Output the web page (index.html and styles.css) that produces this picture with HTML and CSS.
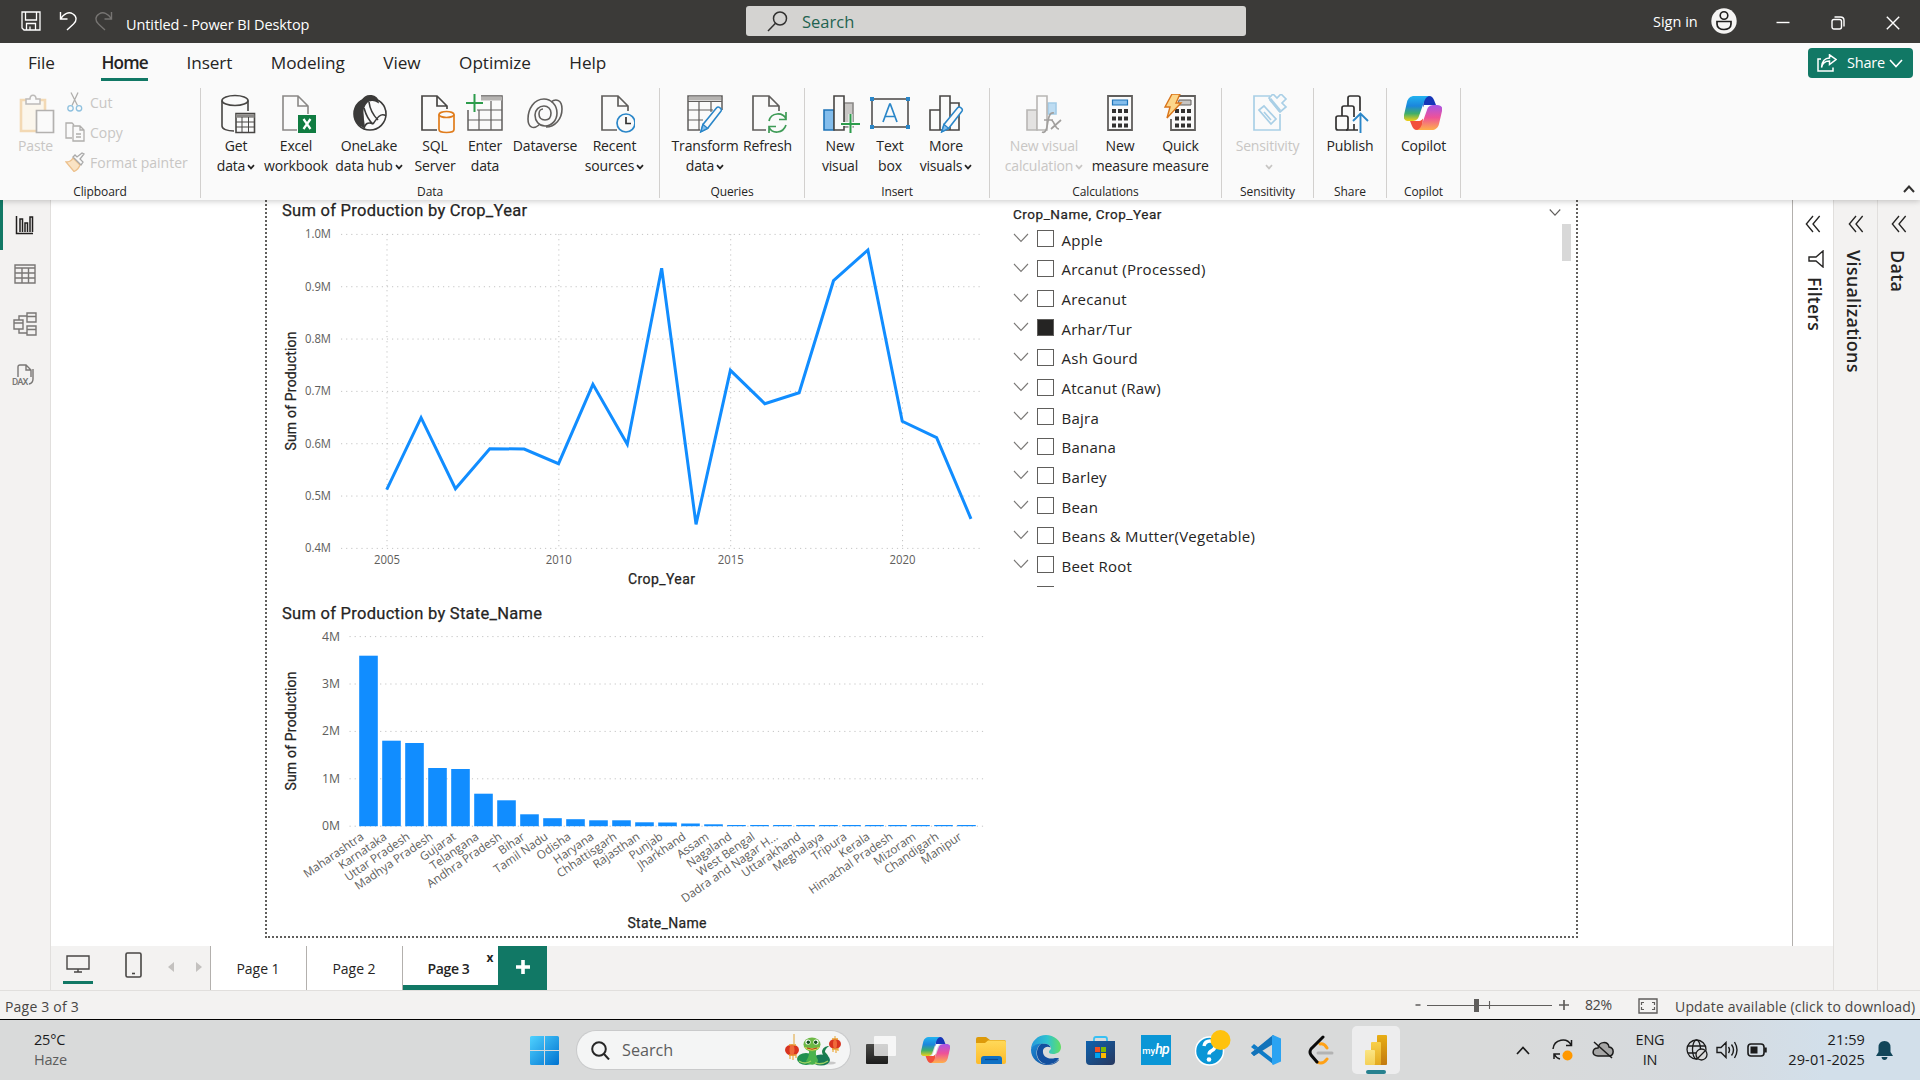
FILE: index.html
```html
<!DOCTYPE html>
<html lang="en">
<head>
<meta charset="utf-8">
<title>Untitled - Power BI Desktop</title>
<link rel="stylesheet" href="styles.css">
</head>
<body>
<svg class="defs" width="0" height="0" aria-hidden="true">
  <defs>
    <linearGradient id="cpA" x1="0" y1="0" x2="0" y2="1"><stop offset="0" stop-color="#22b3f0"/><stop offset=".4" stop-color="#1b86dc"/><stop offset=".7" stop-color="#3fae6a"/><stop offset="1" stop-color="#f2d016"/></linearGradient>
    <linearGradient id="cpB" x1="0" y1="0" x2="0" y2="1"><stop offset="0" stop-color="#a855e8"/><stop offset=".5" stop-color="#ee5298"/><stop offset="1" stop-color="#ffb04a"/></linearGradient>
    <linearGradient id="win" x1="0" y1="0" x2="1" y2="1"><stop offset="0" stop-color="#4fd2ff"/><stop offset="1" stop-color="#0072d0"/></linearGradient>
    <linearGradient id="dark" x1="0" y1="0" x2="0" y2="1"><stop offset="0" stop-color="#4a4a48"/><stop offset="1" stop-color="#1d1d1c"/></linearGradient>
    <linearGradient id="fold" x1="0" y1="0" x2="0" y2="1"><stop offset="0" stop-color="#ffd95a"/><stop offset="1" stop-color="#fdbb2a"/></linearGradient>
    <linearGradient id="edgeA" x1="0" y1="0" x2="1" y2="0"><stop offset="0" stop-color="#2598dc"/><stop offset=".55" stop-color="#2fc3cf"/><stop offset="1" stop-color="#62de62"/></linearGradient>
    <linearGradient id="edgeB" x1="0" y1="0" x2="1" y2="1"><stop offset="0" stop-color="#1b8ad6"/><stop offset="1" stop-color="#0e4596"/></linearGradient>
    <linearGradient id="bag" x1="0" y1="0" x2="1" y2="1"><stop offset="0" stop-color="#0e62ae"/><stop offset="1" stop-color="#27375e"/></linearGradient>
    <linearGradient id="pbA" x1="0" y1="0" x2="0" y2="1"><stop offset="0" stop-color="#e8ae14"/><stop offset="1" stop-color="#c27a10"/></linearGradient>
    <linearGradient id="pbB" x1="0" y1="0" x2="0" y2="1"><stop offset="0" stop-color="#f8d04a"/><stop offset="1" stop-color="#e3a91f"/></linearGradient>
    <linearGradient id="pbC" x1="0" y1="0" x2="0" y2="1"><stop offset="0" stop-color="#fbe584"/><stop offset="1" stop-color="#f4d057"/></linearGradient>
    <symbol id="copilot" viewBox="0 0 38 34" preserveAspectRatio="none">
      <path d="M20 0h5c3 0 4 2 5 4l2 5h-8c-3 0-4 1-5 3z" fill="#1636b8"/>
      <path d="M18 34h-5c-3 0-4-2-5-4l-2-5h8c3 0 4-1 5-3z" fill="#f2503c"/>
      <path d="M10 0h15c-3 1-4 3-5 6l-5 14c-1 4-4 5-7 5H5c-4 0-6-2-5-6L3 6c1-4 4-6 7-6z" fill="url(#cpA)"/>
      <path d="M28 34H13c3-1 4-3 5-6l5-14c1-4 4-5 7-5h3c4 0 6 2 5 6l-3 13c-1 4-4 6-7 6z" fill="url(#cpB)"/>
      <path d="M20 9h5c-2 1-3 3-4 6l-2 7c-1 2-3 3-6 3 2-1 2-2 3-4z" fill="#fff"/>
    </symbol>
    <symbol id="dbl" viewBox="0 0 18 20"><path d="M9 1 1.500 10 9 19M16.500 1 9 10l7.500 9" fill="none" stroke="#252423" stroke-width="1.500"/></symbol>
    <symbol id="caret" viewBox="0 0 8 6"><path d="M1 1.200 4 4.400 7 1.200" fill="none" stroke="currentColor" stroke-width="1.700"/></symbol>
    <symbol id="chev" viewBox="0 0 16 10"><path d="M1 1 8 8.500 15 1" fill="none" stroke="#7a7876" stroke-width="1.100"/></symbol>
    <symbol id="pencil" viewBox="0 0 28 34"><path d="M1.500 32.500 4 24 20 4.500c2-2.500 7 1 5 4L9.500 28.500z" fill="#fafafa" stroke="#2a86c8" stroke-width="1.800"/><path d="M1.500 32.500 4 24l5.500 4.500z" fill="#83bdec" stroke="#2a86c8" stroke-width="1.500"/></symbol>
  </defs>
</svg>

<header class="titlebar">
  <div class="quick">
    <svg width="20" height="20" viewBox="0 0 20 20" fill="none" stroke="#fff" stroke-width="1.300"><path d="M1 1h18v18H3l-2-2zM4.500 1v8h11V1M5.500 19v-6.500h9V19M9 15.500V19"/></svg>
    <svg width="18" height="20" viewBox="0 0 18 20" fill="none" stroke="#fff" stroke-width="1.400"><path d="M1.500 1v7h7M1.500 8C5 2 10 .500 14 3s4 7 .500 10L8 19"/></svg>
    <svg width="18" height="20" viewBox="0 0 18 20" fill="none" stroke="#767472" stroke-width="1.400"><path d="M16.500 1v7h-7M16.500 8C13 2 8 .500 4 3s-4 7-.500 10L10 19"/></svg>
  </div>
  <span class="doc-title">Untitled - Power BI Desktop</span>
  <div class="top-search">
    <svg width="21" height="21" viewBox="0 0 21 21" fill="none" stroke="#323130" stroke-width="1.500"><circle cx="13" cy="7.500" r="6.500"/><path d="M8.500 12.300 1 20"/></svg>
    <span>Search</span>
  </div>
  <span class="signin">Sign in</span>
  <svg class="avatar" width="26" height="26" viewBox="0 0 26 26"><circle cx="13" cy="13" r="12.700" fill="#f5f4f3"/><circle cx="13" cy="7.500" r="3.800" fill="none" stroke="#201f1e" stroke-width="1.600"/><path d="M6 13.500h14v2.500c0 3.500-3 5.500-7 5.500s-7-2-7-5.500z" fill="none" stroke="#201f1e" stroke-width="1.700"/></svg>
  <div class="win-controls">
    <svg width="14" height="14" viewBox="0 0 14 14"><path d="M.5 6.500h13" stroke="#fff" stroke-width="1.400"/></svg>
    <svg width="14" height="14" viewBox="0 0 14 14" fill="none" stroke="#fff" stroke-width="1.400"><rect x="1" y="3.500" width="9.500" height="9.500" rx="2"/><path d="M3.500 1h6q3.500 0 3.500 3.500v6"/></svg>
    <svg width="14" height="14" viewBox="0 0 14 14"><path d="m.8.8 12.400 12.400M13.200.8.8 13.200" stroke="#fff" stroke-width="1.400"/></svg>
  </div>
</header>

<nav class="tabs">
  <span class="tab file">File</span><span class="tab active">Home</span><span class="tab">Insert</span><span class="tab">Modeling</span><span class="tab">View</span><span class="tab">Optimize</span><span class="tab">Help</span>
  <button class="share">
    <svg width="20" height="18" viewBox="0 0 20 18" fill="none" stroke="#fff" stroke-width="1.500"><path d="M4 5H1v12h15v-3.500M4.500 13.500C5.500 8.500 8.500 7 12.500 7v3.500L19 5.500 12.500.8V4C8 4 4.500 7.500 4.500 13.500z"/></svg>
    <span>Share</span>
    <svg width="14" height="9" viewBox="0 0 14 9" fill="none" stroke="#fff" stroke-width="1.600"><path d="m1 1 6 6.500L13 1"/></svg>
  </button>
</nav>

<section class="ribbon">
  <div class="group g-clip">
    <div class="row disabled">
      <div class="btn w-paste">
        <svg width="40" height="40" viewBox="0 0 40 40" fill="none"><path d="M5 6h24v31H5z" fill="#fbf6ec" stroke="#f3d9b4" stroke-width="2.600"/><path d="M10 10V5h4c0-5 6-5 6 0h4v5z" fill="#fafafa" stroke="#bdbbb9" stroke-width="1.500"/><path d="M20.500 16.500h17v22h-17z" fill="#fafafa" stroke="#b3b1af" stroke-width="1.700"/></svg>
        <span>Paste</span>
      </div>
      <div class="small-cmds">
        <div><svg width="20" height="20" viewBox="0 0 20 20" fill="none" stroke="#b0aeac" stroke-width="1.300"><path d="m6 .5 6.500 13M13 .5 7 13.500"/><circle cx="5.500" cy="16.300" r="2.700" stroke="#8fc1df"/><circle cx="14" cy="16.300" r="2.700" stroke="#8fc1df"/></svg><span>Cut</span></div>
        <div><svg width="20" height="20" viewBox="0 0 20 20" fill="none" stroke="#b0aeac" stroke-width="1.300"><path d="M7 16H1V1h6l2 2M8 4h7l4 4v11H8zM15 4v4h4M11 12h5M11 15h5"/></svg><span>Copy</span></div>
        <div><svg width="20" height="20" viewBox="0 0 20 20" fill="none"><path d="M1 10c4 0 6-2 7-4l7 7c-1 3-3 5-6 6.500z" fill="#fae3c4" stroke="#ecc08c" stroke-width="1.300"/><path d="m8 5 8 8 2-3-3-3 4-5-2-1-5 4-2-2z" fill="#fafafa" stroke="#aaa" stroke-width="1.300"/></svg><span>Format painter</span></div>
      </div>
    </div>
    <div class="label">Clipboard</div>
  </div>

  <div class="group g-data">
    <div class="row">
      <div class="btn w50"><svg width="40" height="40" viewBox="0 0 40 40" fill="none" stroke="#484644" stroke-width="1.600"><ellipse cx="19" cy="6.500" rx="13" ry="5"/><path d="M6 6.500V32c0 3 5 5 12 5M32 6.500V17"/><path d="M20 19.500h18.500v19H20z" fill="#fafafa"/><path d="M20 22h18.500" stroke="#8a8886" stroke-width="3.500"/><path d="M20 28h18.500M20 33h18.500M26 23v15M32.500 23v15" stroke-width="1"/></svg><span>Get<br>data<svg class="caret"><use href="#caret"/></svg></span></div>
      <div class="btn w70 nudge"><svg width="40" height="40" viewBox="0 0 40 40" fill="none" stroke="#8a8886" stroke-width="1.600"><path d="M31 20V12L21 2H6v34h14M21 2v10h10"/><path d="M21 21h18v18H21z" fill="#107c41" stroke="none"/><path d="m26.500 25 7 10M33.500 25l-7 10" stroke="#fff" stroke-width="2.200"/></svg><span>Excel<br>workbook</span></div>
      <div class="btn w76 nudge"><svg width="40" height="40" viewBox="0 0 40 40" fill="none" stroke="#3b3a39" stroke-width="1.600"><circle cx="20" cy="20" r="16"/><path d="M12 7C16-1 28 1 28 8c-3-2-8-3-11 0-4 4-5 9-4 14 0 5 1 7 1 11C3 29 1 15 12 7z" fill="#3b3a39"/><path d="M14 14c2 7 4 12 9 16-6-3-8 1-9 4M19 8c1 8 5 14 9 18M36 22c-5-4-9 2-13 8"/></svg><span>OneLake<br>data hub<svg class="caret"><use href="#caret"/></svg></span></div>
      <div class="btn w56 nudge"><svg width="40" height="40" viewBox="0 0 40 40" fill="none" stroke="#484644" stroke-width="1.700"><path d="M31 15v-3L21 2H6v34h15M21 2v10h10"/><path d="M23 20.500v15c0 4 15 4 15 0v-15" stroke="#e07c1c" fill="#fafafa"/><ellipse cx="30.500" cy="20.500" rx="7.500" ry="3" stroke="#e07c1c" fill="#fafafa"/></svg><span>SQL<br>Server</span></div>
      <div class="btn w44"><svg width="40" height="40" viewBox="0 0 40 40" fill="none" stroke="#605e5c" stroke-width="1.500"><path d="M16 2h21v34H3V16"/><path d="M16 4.500h21" stroke="#b5b3b1" stroke-width="4"/><path d="M3 26h34M12 16h25M14 16v20M26 7v29" stroke-width="1.200"/><path d="M9.500 0v18M1 9h17" stroke="#2d9c4c" stroke-width="2"/></svg><span>Enter<br>data</span></div>
      <div class="btn w76"><svg width="40" height="40" viewBox="0 0 40 40" fill="none" stroke="#605e5c" stroke-width="1.600"><path d="M14 31C8 36 3 33 3 25 3 15 9 5 19 5c7 0 13 6 13 14 0 7-5 13-12 13-6 0-10-5-10-11 0-5 4-9 9-9 4 0 7 3 7 7s-2 7-6 7-6-3-6-6 2-5 4-5"/><path d="M26 8c5-4 11-2 11 7 0 10-7 18-16 18"/></svg><span>Dataverse</span></div>
      <div class="btn w63"><svg width="40" height="40" viewBox="0 0 40 40" fill="none" stroke="#605e5c" stroke-width="1.700"><path d="M33 17v-5L23 2H7v34h15M23 2v10h10"/><circle cx="31" cy="29" r="9" stroke="#2a86c8" fill="#fafafa"/><path d="M31 23v6.500h5" stroke="#323130"/></svg><span>Recent<br>sources<svg class="caret"><use href="#caret"/></svg></span></div>
    </div>
    <div class="label">Data</div>
  </div>

  <div class="group g-query">
    <div class="row">
      <div class="btn w68"><svg width="40" height="40" viewBox="0 0 40 40" fill="none" stroke="#605e5c" stroke-width="1.500"><path d="M37 16V2H3v34h12"/><path d="M4 4.500h32" stroke="#b5b3b1" stroke-width="4"/><path d="M3 7.500h34M3 16h25M3 26h15M14 8v28M26 8v10" stroke-width="1.200"/><use href="#pencil" x="13" y="10" width="27" height="29"/></svg><span>Transform<br>data<svg class="caret"><use href="#caret"/></svg></span></div>
      <div class="btn w57"><svg width="40" height="40" viewBox="0 0 40 40" fill="none" stroke="#605e5c" stroke-width="1.700"><path d="M31 17v-5L21 2H5v34h13M21 2v10h10"/><path d="M21 27c2-9 14-9 17-2M38 18v7.500h-7M38 31c-3 9-14 9-17 2M21 39v-6.500h7" stroke="#3e9b56"/></svg><span>Refresh</span></div>
    </div>
    <div class="label">Queries</div>
  </div>

  <div class="group g-insert">
    <div class="row">
      <div class="btn w50"><svg width="40" height="40" viewBox="0 0 40 40" fill="none" stroke="#484644" stroke-width="1.600"><path d="M4 16h10v20H4z" fill="#83bdec" stroke="#1f74b8"/><path d="M24 9h9v24h-9z" fill="#c8c6c4" stroke="#8a8886"/><path d="M14 2h10v34H14z" fill="#fafafa"/><path d="M30.500 20v19M21 30h19" stroke="#fafafa" stroke-width="4"/><path d="M30.500 20v19M21 30h19" stroke="#2d9c4c" stroke-width="2"/></svg><span>New<br>visual</span></div>
      <div class="btn w50"><svg width="40" height="40" viewBox="0 0 40 40" fill="none" stroke="#484644" stroke-width="1.500"><path d="M2 5h36v28H2z"/><path d="m13 28 6.700-18h.6L27 28M15.300 22.500h9.500" stroke="#2a86c8" stroke-width="1.700"/><path d="M0 3h4v4H0zm36 0h4v4h-4zM0 31h4v4H0zm36 0h4v4h-4z" fill="#2a86c8" stroke="none"/></svg><span>Text<br>box</span></div>
      <div class="btn w62"><svg width="40" height="40" viewBox="0 0 40 40" fill="none" stroke="#484644" stroke-width="1.600"><path d="M4 16h10v20H4zM14 2h10v34H14zM24 9h9v27h-9z"/><use href="#pencil" x="13" y="10" width="27" height="29"/></svg><span>More<br>visuals<svg class="caret"><use href="#caret"/></svg></span></div>
    </div>
    <div class="label">Insert</div>
  </div>

  <div class="group g-calc">
    <div class="row">
      <div class="btn w90 disabled"><svg width="40" height="40" viewBox="0 0 40 40" fill="none" stroke="#b8b6b4" stroke-width="1.600"><path d="M3 16h10v20H3z" fill="#e3e2e1"/><path d="M24 9h8v11h-8z" fill="#bddcf2" stroke="#a3cbe6"/><path d="M13 2h10v34H13z" fill="#fafafa"/><path d="M18 38c5 2 5-7 6-11 1-5 2-9 6-8M20 26h9M27 26c3 0 4 9 8 9M37 26l-10 9" stroke="#a19f9d" stroke-width="1.700"/></svg><span>New visual<br>calculation<svg class="caret"><use href="#caret"/></svg></span></div>
      <div class="btn w62"><svg width="40" height="40" viewBox="0 0 40 40" fill="none" stroke="#605e5c" stroke-width="1.800"><path d="M8 2h24v34H8z"/><path d="M12.500 6h15v5h-15z" fill="#83bdec" stroke="#1f74b8" stroke-width="1.200"/><path d="M12 17h16M12 24.500h16M12 31.500h16" stroke="#323130" stroke-width="4" stroke-dasharray="4 2"/></svg><span>New<br>measure</span></div>
      <div class="btn w59"><svg width="40" height="40" viewBox="0 0 40 40" fill="none" stroke="#605e5c" stroke-width="1.800"><path d="M14 2h20v34H10V25"/><path d="M18 6h12v5H17z" fill="#c8c6c4" stroke-width="1"/><path d="M14 17h16M14 24.500h16M14 31.500h16" stroke="#323130" stroke-width="4" stroke-dasharray="4 2"/><path d="M11 0h8l-4 9h5L6 24l3-11H4z" fill="#fcd68a" stroke="#d9741a" stroke-width="1.400"/></svg><span>Quick<br>measure</span></div>
    </div>
    <div class="label">Calculations</div>
  </div>

  <div class="group g-sens">
    <div class="row">
      <div class="btn disabled"><svg width="40" height="40" viewBox="0 0 40 40" fill="none" stroke="#a9cfe6" stroke-width="1.700"><path d="M22 2H6v34h26V20"/><path d="m11 16 5-4 12 13-5 5zM16 18l7 8" fill="#fafafa"/><path d="m21 4 4-4 4 4 4-4 5 5-4 4 4 4-6 5z" fill="#fafafa"/><path d="m22 5 10 12" stroke-width="3"/></svg><span>Sensitivity<br><svg class="caret"><use href="#caret"/></svg></span></div>
    </div>
    <div class="label">Sensitivity</div>
  </div>

  <div class="group g-share">
    <div class="row">
      <div class="btn"><svg width="40" height="40" viewBox="0 0 40 40" fill="none" stroke="#323130" stroke-width="1.700"><rect x="6" y="22" width="12" height="14" rx="2"/><path d="M12 22v-8q0-2 2-2h8q2 0 2 2v9M18 12V4q0-2 2-2h8q2 0 2 2v13M16 36h12M24 30v6"/><path d="M30.500 39V20M23 27l7.500-7.500L38 27" stroke="#2a86c8" stroke-width="1.900"/></svg><span>Publish</span></div>
    </div>
    <div class="label">Share</div>
  </div>

  <div class="group g-cop">
    <div class="row">
      <div class="btn"><svg width="40" height="40" viewBox="0 0 40 40"><use href="#copilot" x="0" y="2" width="38" height="34"/></svg><span>Copilot</span></div>
    </div>
    <div class="label">Copilot</div>
  </div>
  <svg class="collapse" width="12" height="8" viewBox="0 0 12 8"><path d="M1 7 6 1.500 11 7" fill="none" stroke="#323130" stroke-width="2"/></svg>
</section>

<main class="workspace">
  <aside class="rail">
    <div class="rail-item on"><svg width="20" height="20" viewBox="0 0 20 20" fill="none" stroke="#201f1e" stroke-width="1.500"><path d="M1.500 1v17.500H18M5 17V4h2.500v13M10 17V8h2.500v9M15 17V2h2.500v15"/></svg></div>
    <div class="rail-item"><svg width="22" height="20" viewBox="0 0 22 20" fill="none" stroke="#797775" stroke-width="1.400"><path d="M1 1h20v18H1zM1 4h20M1 9h20M1 14h20M8 4v15M14.500 4v15"/></svg></div>
    <div class="rail-item"><svg width="24" height="24" viewBox="0 0 24 24" fill="none" stroke="#797775" stroke-width="1.400"><path d="M1 8h9v9H1zM1 11h9M14 1h9v9h-9zM14 4.500h9M14 14h9v9h-9zM14 17.500h9M6 8V4h8M6 17v4h8"/></svg></div>
    <div class="rail-item dax"><svg width="23" height="22" viewBox="0 0 23 22" fill="none" stroke="#797775" stroke-width="1.400"><path d="M6 13V3q0-2 2-2h6l5 5v7M14 1v5h5M21 5v10q0 4-4 5"/><text x="0" y="20.500" font-family="Roboto" font-size="9.500" font-weight="500" fill="#797775" stroke="none" textLength="16.500">DAX</text></svg></div>
  </aside>

  <div class="center">
    <div class="stage">
      <div class="report-page">
        <div class="visuals">
          <svg id="lineChart" class="chart" width="732" height="396" viewBox="268 200 732 396"></svg>
          <svg id="barChart" class="chart" width="732" height="340" viewBox="268 596 732 340"></svg>
        </div>
        <div class="slicer">
          <div class="slicer-head"><span>Crop_Name, Crop_Year</span><svg width="12" height="9" viewBox="0 0 16 10"><path d="M1 1 8 8.500 15 1" fill="none" stroke="#605e5c" stroke-width="1.500"/></svg></div>
          <div class="slicer-body">
            <div class="items">
              <div class="item"><svg><use href="#chev"/></svg><i></i><span>Apple</span></div>
              <div class="item"><svg><use href="#chev"/></svg><i></i><span>Arcanut (Processed)</span></div>
              <div class="item"><svg><use href="#chev"/></svg><i></i><span>Arecanut</span></div>
              <div class="item"><svg><use href="#chev"/></svg><i class="checked"></i><span>Arhar/Tur</span></div>
              <div class="item"><svg><use href="#chev"/></svg><i></i><span>Ash Gourd</span></div>
              <div class="item"><svg><use href="#chev"/></svg><i></i><span>Atcanut (Raw)</span></div>
              <div class="item"><svg><use href="#chev"/></svg><i></i><span>Bajra</span></div>
              <div class="item"><svg><use href="#chev"/></svg><i></i><span>Banana</span></div>
              <div class="item"><svg><use href="#chev"/></svg><i></i><span>Barley</span></div>
              <div class="item"><svg><use href="#chev"/></svg><i></i><span>Bean</span></div>
              <div class="item"><svg><use href="#chev"/></svg><i></i><span>Beans &amp; Mutter(Vegetable)</span></div>
              <div class="item"><svg><use href="#chev"/></svg><i></i><span>Beet Root</span></div>
              <div class="item cut"><i></i></div>
            </div>
            <div class="thumb"></div>
          </div>
        </div>
      </div>
      <aside class="pane filters"><svg width="16" height="18"><use href="#dbl"/></svg><svg class="funnel" width="16" height="18" viewBox="0 0 16 18"><path d="M15 1v16L8 11H1V7h7z" fill="none" stroke="#252423" stroke-width="1.400"/></svg><span>Filters</span></aside>
    </div>
    <footer class="pages">
      <div class="views">
        <div class="view on"><svg width="24" height="18" viewBox="0 0 24 18" fill="none" stroke="#484644" stroke-width="1.400"><path d="M1 1h22v13H1zM12 14v3M8 17h8"/></svg></div>
        <svg class="phone" width="17" height="26" viewBox="0 0 17 26" fill="none" stroke="#484644" stroke-width="1.600"><rect x="1" y="1" width="15" height="24" rx="1.500"/><path d="M7 21.500h3"/></svg>
        <svg class="arrow" width="6" height="10" viewBox="0 0 6 10"><path d="M6 0v10L0 5z" fill="#c3c1bf"/></svg>
        <svg class="arrow" width="6" height="10" viewBox="0 0 6 10"><path d="M0 0v10l6-5z" fill="#c3c1bf"/></svg>
      </div>
      <div class="page-tab">Page 1</div><div class="page-tab">Page 2</div><div class="page-tab current">Page 3<b>x</b></div>
      <div class="add"><svg width="14" height="14" viewBox="0 0 14 14"><path d="M7 0v14M0 7h14" stroke="#fff" stroke-width="3.600"/></svg></div>
    </footer>
  </div>
  <aside class="pane vis"><svg width="16" height="18"><use href="#dbl"/></svg><span>Visualizations</span></aside>
  <aside class="pane fields"><svg width="16" height="18"><use href="#dbl"/></svg><span>Data</span></aside>
</main>

<div class="status">
  <span class="count">Page 3 of 3</span>
  <div class="zoom">
    <svg width="155" height="20" viewBox="0 0 155 20" stroke="#605e5c"><path d="M1.500 10h5M145 10h10M150 5v10" stroke-width="1.700"/><path d="M13 10.500h125M75.500 6v8" stroke-width="1.100"/><path d="M62.500 4v13" stroke-width="5"/></svg>
    <span class="pct">82%</span>
    <svg class="fit" width="20" height="16" viewBox="0 0 20 16" fill="none" stroke="#605e5c" stroke-width="1.400"><path d="M1 1h18v14H1z"/><path d="M6 4.500H3.500V7M14 4.500h2.500V7M6 11.500H3.500V9M14 11.500h2.500V9" stroke-width="1.200"/></svg>
    <span class="update">Update available (click to download)</span>
  </div>
</div>

<div class="taskbar">
  <div class="weather"><div>25°C</div><div class="dim">Haze</div></div>
  <svg class="start" width="29" height="29" viewBox="0 0 29 29" fill="url(#win)"><path d="M1.500 0H14v14H0V1.500Q0 0 1.500 0zM15 0h12.500Q29 0 29 1.500V14H15zM0 15h14v14H1.500Q0 29 0 27.500zM15 15h14v12.500q0 1.500-1.500 1.500H15z"/></svg>
  <div class="task-search">
    <svg width="19" height="19" viewBox="0 0 19 19" fill="none" stroke="#262626" stroke-width="2"><circle cx="8" cy="8" r="6.800"/><path d="m13 13 5 5.500"/></svg>
    <span>Search</span>
    <svg class="snake" width="58" height="34" viewBox="0 0 58 34">
      <path d="M9 0v10M50 2v6" stroke="#e0a437" stroke-width="1"/><path d="M5 20v5M8 20v6M11 20v4M48 13v5M51 13v6M53 13v4" stroke="#eeb04a" stroke-width="1.300"/>
      <ellipse cx="7" cy="16" rx="7" ry="5.500" fill="#d8331f"/><ellipse cx="50" cy="10" rx="6" ry="5" fill="#d8331f"/><path d="M4 11h7M4 21h7M47 5h6M47 15h6" stroke="#e8a030" stroke-width="1.300"/><ellipse cx="7" cy="16" rx="2.500" ry="5" fill="#ef6a3a"/><ellipse cx="50" cy="10" rx="2" ry="4.500" fill="#ef6a3a"/>
      <ellipse cx="42" cy="29" rx="9" ry="1.600" fill="#c8c8c8"/><path d="M40 29c7-3 3-8 0-11 0-3 3-5 4-6-3 0-7 2-7 6" fill="#1b7f4c"/><ellipse cx="21" cy="25" rx="9" ry="6" fill="#1f9150"/><ellipse cx="36" cy="26" rx="9" ry="5.500" fill="#187a55"/><path d="M23 13h9c-2 6-1 9 1 13 0 6-10 6-12 1 3-4 4-9 2-14z" fill="#4ab34d"/><path d="M14 27q6 4 12 0M30 29q7 2 13-2" stroke="#9ed263" stroke-width="1.500" fill="none"/>
      <ellipse cx="27" cy="10.500" rx="8.500" ry="7" fill="#6cb845"/><path d="M18.500 13q8.500 7 17 0-8.500 2-17 0z" fill="#ecd34f"/><circle cx="23" cy="8" r="2.600" fill="#fff"/><circle cx="31" cy="8" r="2.600" fill="#fff"/><circle cx="23.300" cy="8.300" r="1.700" fill="#14521f"/><circle cx="30.700" cy="8.300" r="1.700" fill="#14521f"/><path d="M22 14q5 2.500 10 0" stroke="#b3371c" fill="none"/>
    </svg>
  </div>
  <div class="apps">
    <div class="app"><svg width="30" height="28" viewBox="0 0 30 28"><rect y="8" width="22" height="20" rx="1" fill="url(#dark)"/><rect x="8" width="22" height="20" rx="1" fill="#fff" opacity=".75"/></svg></div>
    <div class="app"><svg width="29" height="26"><use href="#copilot" width="29" height="26"/></svg></div>
    <div class="app"><svg width="30" height="27" viewBox="0 0 30 27"><path d="M2 0h8l4 3h14q2 0 2 2v4H0V2q0-2 2-2z" fill="#dd9a0a"/><path d="M12 3.500h16q2 0 2 2V25q0 2-2 2H2q-2 0-2-2V6h9z" fill="url(#fold)"/><path d="M5 27v-5q0-3 3-3h15q3 0 3 3v5z" fill="#0f70c4"/><path d="M9 22.500h13" stroke="#0a4a94" stroke-width="1.200"/></svg></div>
    <div class="app"><svg width="30" height="30" viewBox="0 0 30 30"><path d="M0 15C0 6 7 0 15 0s15 6 15 12c0 5-4 7-8 7-3 0-4-1-4-2 0-2 2-2 2-4 0-3-5-5-9-4C5 9 1 11 0 15z" fill="url(#edgeA)"/><path d="M0 15c0-3 5-7 10-6-7 4-6 19 5 20 6 1 9-1 12-4 1-1 1 0 1 0-3 4-7 5-12 5C7 30 0 23 0 15z" fill="url(#edgeB)"/><path d="M10 9c4-1 9 0 10 4 0-1-6-3-8 2-1 7 6 10 12 8l4 0c-3 5-8 7-13 6C4 27 4 13 10 9z" fill="#124f9f"/></svg></div>
    <div class="app"><svg width="29" height="29" viewBox="0 0 29 29"><path d="M8 6V3q0-2 2-2h9q2 0 2 2v3" fill="none" stroke="#38c0f3" stroke-width="1.800"/><path d="M0 5h29v20q0 4-4 4H4q-4 0-4-4z" fill="url(#bag)"/><path d="M9 11h5v5H9z" fill="#f25022"/><path d="M15 11h5v5h-5z" fill="#7fba00"/><path d="M9 17h5v5H9z" fill="#00a4ef"/><path d="M15 17h5v5h-5z" fill="#ffb900"/></svg></div>
    <div class="app"><div class="myhp">my<b>hp</b></div></div>
    <div class="app help"><svg width="36" height="36" viewBox="0 0 36 36"><circle cx="14.500" cy="21" r="14" fill="#0a96d6" stroke="#fff" stroke-width="1.500"/><path d="M9 16q1-5 6-5t5 5q0 3-3 4.500t-3 4" fill="none" stroke="#fff" stroke-width="3.400"/><circle cx="14" cy="29.500" r="2.300" fill="#fff"/><circle cx="25.500" cy="10" r="10" fill="#ffc20e"/></svg></div>
    <div class="app"><svg width="30" height="30" viewBox="0 0 30 30"><path d="M3 9 22 24v5L0 12zM3 21 22 6V1L0 18z" fill="#0f7cc8"/><path d="M0 18 22 0l2 2v6L3 21z" fill="#1273ba"/><path d="m22 0 8 3.500v23L22 30l-1-1V1z" fill="#2ba3f2"/></svg></div>
    <div class="app"><svg width="26" height="30" viewBox="0 0 26 30" fill="none" stroke-linecap="round" stroke-width="3"><path d="M12 9q4-1 7 4M9 27q6 3 10-3" stroke="#ffa116"/><path d="M10 18h14" stroke="#b3b3b3"/><path d="M15 2 3 14q-2 3 0 6l6 7" stroke="#0a0a0a"/></svg></div>
    <div class="app active"><svg width="22" height="30" viewBox="0 0 22 30"><rect x="12" width="10" height="30" rx="1" fill="url(#pbA)"/><rect x="6" y="7" width="10" height="23" rx="1" fill="url(#pbB)"/><rect y="15" width="10" height="15" rx="1" fill="url(#pbC)"/></svg><em></em></div>
  </div>
  <div class="tray">
    <svg width="14" height="9" viewBox="0 0 14 9"><path d="m1 8 6-6.500L13 8" fill="none" stroke="#1b1b1b" stroke-width="1.700"/></svg>
    <svg class="t-sync" width="22" height="22" viewBox="0 0 22 22" fill="none" stroke="#1b1b1b" stroke-width="1.500"><path d="M1 10C2 0 15-2 19 6M19.500 1v5.500H14M2 20v-5h6M2 15q2 4 6 5"/><circle cx="15.500" cy="16.500" r="5" fill="#ff9800" stroke="none"/></svg>
    <svg class="t-cloud" width="22" height="18" viewBox="0 0 22 18" fill="#a6a6a6" stroke="#1b1b1b" stroke-width="1.500"><path d="M6 15c-7 0-6-8 0-8 1-7 10-7 11-1 6 1 5 9 0 9z"/><path d="m2 1 18 16"/></svg>
    <div class="lang">ENG<br>IN</div>
    <svg class="t-globe" width="22" height="22" viewBox="0 0 22 22" fill="none" stroke="#1b1b1b" stroke-width="1.300"><circle cx="10.500" cy="10.500" r="9.500"/><ellipse cx="10.500" cy="10.500" rx="4" ry="9.500"/><path d="M2 7h17M2 14h17"/><circle cx="15.500" cy="15.500" r="5.500" fill="#dadada"/><path d="m12 19 7-7"/></svg>
    <svg class="t-vol" width="22" height="18" viewBox="0 0 22 18" fill="none" stroke="#1b1b1b" stroke-width="1.400"><path d="M1 6.500h4l5-5v15l-5-5H1zM12.500 6q2 3 0 6M15.500 3.500q4 5.500 0 11M18.500 1q5 8 0 16"/></svg>
    <svg class="t-bat" width="21" height="14" viewBox="0 0 21 14"><rect x="1" y="1" width="16" height="12" rx="3" fill="none" stroke="#1b1b1b" stroke-width="1.600"/><rect x="3.500" y="3.500" width="7" height="7" fill="#1b1b1b"/><path d="M18.500 4.500v5" stroke="#1b1b1b" stroke-width="2.500"/></svg>
    <div class="clock">21:59<br>29-01-2025</div>
    <svg class="t-bell" width="17" height="19" viewBox="0 0 17 19" fill="#12465a"><path d="M8.500 0q6 0 6 6.500V11l2.500 4H0l2.500-4V6.500Q2.500 0 8.500 0zM5.500 16h6q-.5 3-3 3t-3-3z"/></svg>
  </div>
</div>
<script src="charts.js"></script>
</body>
</html>
```
FILE: styles.css
```css
* { box-sizing: border-box; }
body {
  margin: 0;
  width: 1920px;
  height: 1080px;
  overflow: hidden;
  display: flex;
  flex-direction: column;
  background: #fff;
  color: #252423;
  font-family: "Open Sans", "Noto Sans", sans-serif;
  font-size: 14px;
}
svg { display: block; flex: none; }
.defs { position: absolute; }

/* Title bar */
.titlebar { height: 43px; flex: none; display: flex; background: #3b3a38; color: #fff; }
.quick { display: flex; gap: 18px; margin: 11px 0 0 21px; width: 105px; }
.doc-title { width: 620px; line-height: 49px; font-size: 14.5px; letter-spacing: -0.1px; white-space: nowrap; }
.top-search { display: flex; width: 500px; height: 30px; margin-top: 6px; padding: 5px 0 0 21px; gap: 14px; border-radius: 3px; background: #d4d3d1; color: #1f6350; font-size: 16.5px; line-height: 21px; }
.signin { margin-left: 407px; width: 58px; line-height: 43px; font-size: 14.5px; letter-spacing: 0; white-space: nowrap; }
.avatar { margin-top: 8px; }
.win-controls { display: flex; gap: 41px; margin: 16px 0 0 39px; }

/* Tabs */
.tabs { height: 45px; flex: none; display: flex; gap: 38.500px; padding-left: 28px; background: #fafafa; font-size: 17.2px; letter-spacing: -0.07px; }
.tab { height: 38px; line-height: 39px; color: #252423; }
.tab.file { margin-right: 8px; }
.tab.active { font-weight: 600; border-bottom: 3px solid #117865; letter-spacing: -0.8px; }
.share { display: flex; align-items: center; width: 105px; height: 30px; margin: 5px 7px 0 auto; padding: 0 0 0 9px; gap: 0; border: 0; border-radius: 4px; background: #117865; color: #fff; font: 14.5px "Open Sans", sans-serif; letter-spacing: -0.2px; }
.share span { width: 42px; margin: 0 0 2px 10px; text-align: left; }

/* Ribbon */
.ribbon { position: relative; z-index: 2; height: 112px; flex: none; display: flex; background: #fafafa; box-shadow: 0 1px 6px rgba(0,0,0,.22); clip-path: inset(0 0 -8px 0); }
.group { height: 110px; display: flex; flex-direction: column; justify-content: space-between; border-right: 1px solid #d2d0ce; }
.row { display: flex; padding-top: 6px; }
.label { text-align: center; font-size: 12px; line-height: 12px; letter-spacing: -0.1px; }
.btn { display: flex; flex-direction: column; align-items: center; white-space: nowrap; text-align: center; line-height: 20px; letter-spacing: -0.15px; }
.btn > span { margin-top: 2px; }
.nudge > svg { margin-left: 2px; }
.disabled { color: #c8c6c4; }
.caret { display: inline-block; width: 8px; height: 6px; margin-left: 2px; vertical-align: 1px; }
.g-clip { width: 201px; }
.g-data { width: 459px; } .g-data .row { padding-left: 10px; }
.g-query { width: 145px; } .g-query .row { padding-left: 11px; }
.g-insert { width: 185px; } .g-insert .row { padding-left: 10px; }
.g-calc { width: 232px; } .g-calc .row { padding-left: 9px; }
.g-sens { width: 92px; } .g-share { width: 73px; } .g-cop { width: 74px; }
.g-sens .row, .g-share .row, .g-cop .row { justify-content: center; }
.w44 { width: 44px; } .w50 { width: 50px; } .w56 { width: 56px; } .w57 { width: 57px; } .w59 { width: 59px; }
.w62 { width: 62px; } .w63 { width: 63px; } .w68 { width: 68px; } .w70 { width: 70px; } .w76 { width: 76px; } .w90 { width: 90px; }
.w-paste { width: 35px; margin-left: 18px; }
.small-cmds { margin: -7px 0 0 12px; display: flex; flex-direction: column; }
.small-cmds div { height: 30px; display: flex; align-items: center; gap: 5px; white-space: nowrap; }
.collapse { margin: 97px 5px 0 auto; }

/* Workspace */
.workspace { height: 790px; flex: none; display: flex; }
.rail { width: 51px; background: #f3f2f1; border-right: 1px solid #e1dfdd; }
.rail-item { height: 50px; display: flex; align-items: center; justify-content: center; border-left: 3px solid transparent; padding: 0 3px 2px 0; }
.rail-item.on { border-color: #117865; padding-bottom: 0; }
.rail-item.dax { padding: 0 6px 0 0; }
.center { width: 1782px; display: flex; flex-direction: column; }
.stage { height: 746px; display: flex; }
.report-page { width: 1313px; height: 738px; margin: 0 214px; padding-left: 1px; flex: none; display: flex; border: 2px dotted #605e5c; border-top: 0; }
.visuals { width: 732px; height: 736px; flex: none; }
.slicer { flex: 1; padding-left: 13px; }
.slicer-head { display: flex; justify-content: space-between; height: 24px; padding: 5px 15px 0 0; font: 13.5px/18px Roboto, sans-serif; -webkit-text-stroke: .25px #252423; letter-spacing: 0.55px; color: #252423; }
.slicer-head svg { margin-top: 3px; }
.slicer-body { display: flex; justify-content: space-between; padding-right: 5px; }
.items { height: 363px; overflow: hidden; }
.item { display: flex; height: 29.650px; align-items: center; font-size: 15px; letter-spacing: 0.25px; white-space: nowrap; }
.item svg { width: 16px; height: 10px; margin-top: -1px; }
.item i { width: 17px; height: 17px; margin: 0 7.500px 0 8px; border: 1px solid #605e5c; }
.item i.checked { background: #252423; }
.item span { padding-top: 2px; }
.item.cut { padding-left: 16px; }
.thumb { width: 9px; height: 37px; background: #d8d8d8; }

.pane { display: flex; flex-direction: column; align-items: center; color: #252423; font-size: 18px; font-weight: 600; letter-spacing: 0.25px; }
.pane span { writing-mode: vertical-rl; line-height: 22px; }
.filters { width: 41px; padding-top: 15px; border-left: 1px solid #b3b0ad; }
.filters .funnel { margin: 17px 0 9px 6px; }
.filters span { font-size: 17.500px; margin-left: 3px; }
.vis { width: 44px; padding: 15px 0 0 0; background: #f3f2f1; border-left: 1px solid #e1dfdd; }
.fields { width: 43px; padding-top: 15px; background: #f3f2f1; border-left: 1px solid #e1dfdd; }
.vis span, .fields span { margin: 17px 3px 0 0; }

/* Page tabs */
.pages { height: 44px; display: flex; background: #f3f2f1; }
.views { width: 159px; display: flex; padding-left: 12px; }
.view { width: 30px; height: 38px; padding: 9px 3px 0; border-bottom: 3px solid #117865; }
.phone { margin: 6px 26px 0 32px; }
.arrow { margin: 16px 22px 0 0; }
.page-tab { width: 96px; line-height: 46px; text-align: center; background: #fff; border-left: 1px solid #b3b0ad; letter-spacing: -0.05px; padding-right: 1px; }
.page-tab.current { position: relative; font-weight: 600; box-shadow: inset 0 -5px #117865; letter-spacing: -0.4px; padding-right: 4px; }
.page-tab b { position: absolute; right: 5px; top: -11px; font-size: 12px; font-weight: 700; }
.add { width: 49px; display: flex; align-items: center; justify-content: center; background: #117865; padding-bottom: 3px; }

/* Status bar */
.status { height: 30px; flex: none; display: flex; justify-content: space-between; padding: 0 5px; background: #f3f2f1; border-top: 1px solid #e1dfdd; border-bottom: 1.500px solid #000; color: #484644; line-height: 32px; white-space: nowrap; }
.count { letter-spacing: 0.2px; }
.zoom { display: flex; }
.zoom svg { margin: 4px 0 0 -2px; }
.pct { width: 53px; margin-left: 16px; line-height: 28px; letter-spacing: -0.2px; }
.zoom .fit { margin: 7px 0 0; }
.update { margin-left: 17px; width: 240px; letter-spacing: 0.17px; }

/* Taskbar */
.taskbar { height: 60px; flex: none; display: flex; background: linear-gradient(90deg, #d9dada 0 78%, #d6dade 88%, #d2dfea 95%, #d2dfea); color: #1b1b1b; font-size: 14.500px; }
.weather { width: 496px; padding: 10px 0 0 34px; line-height: 20px; letter-spacing: -0.2px; }
.dim { color: #5d5d5d; }
.start { margin: 16px 18px 0 34px; }
.task-search { display: flex; width: 273px; height: 38px; margin-top: 11px; padding-left: 14px; border-radius: 19px; background: #f4f5f5; box-shadow: 0 0 0 1px #c9cacb; color: #5d5d5d; font-size: 16.200px; line-height: 39px; }
.task-search > svg:first-child { margin: 10px 12px 0 0; }
.task-search .snake { margin: 3px 7px 0 auto; }
.apps { display: flex; margin-left: 3px; }
.app { width: 55px; display: flex; align-items: center; justify-content: center; }
.help svg { margin: -4px 0 0 5px; }
.myhp { width: 30px; height: 30px; background: #0a96d6; color: #fff; font: 500 9.500px/29px Roboto, sans-serif; text-align: center; }
.myhp b { font-size: 14px; font-style: italic; font-weight: 500; letter-spacing: -0.8px; }
.app.active { position: relative; width: 48px; height: 48px; margin: 6px 0 0 4px; border-radius: 5px; background: #ededee; }
.app em { position: absolute; left: 14px; bottom: 0; width: 20px; height: 4px; border-radius: 2px; background: #27818f; }
.tray { display: flex; align-items: center; margin-left: auto; margin-right: 27px; line-height: 20px; }
.t-sync { margin-left: 22px; } .t-cloud { margin-left: 18px; }
.lang { width: 50px; margin: 0 11px; text-align: center; letter-spacing: -0.2px; }
.t-vol { margin-left: 8px; } .t-bat { margin-left: 9px; }
.clock { width: 97px; text-align: right; margin-right: 11px; letter-spacing: 0.1px; white-space: nowrap; }

/* Charts */
.chart text { font-family: "Open Sans", sans-serif; font-size: 12px; fill: #605e5c; }
.chart .title { font: 400 16.500px Roboto, sans-serif; fill: #252423; stroke: #252423; stroke-width: .25px; }
.chart .axis { font: 400 14px Roboto, sans-serif; fill: #252423; stroke: #252423; stroke-width: .25px; }
.chart .slant { font-size: 11.700px; }
.chart .grid { stroke: #c4c4c4; stroke-width: 1; stroke-dasharray: 1.200 3.900; }
.chart .bar { fill: #118dff; }
.chart .series { fill: none; stroke: #118dff; stroke-width: 3; stroke-linejoin: miter; }
```
FILE: charts.js
```js
const NS = "http://www.w3.org/2000/svg";
function add(parent, tag, attrs, text) {
  const el = document.createElementNS(NS, tag);
  for (const k in attrs) el.setAttribute(k, attrs[k]);
  if (text) el.textContent = text;
  parent.appendChild(el);
  return el;
}
function label(svg, x, y, text, len, anchor, cls, extra) {
  const a = { x: x, y: y, "text-anchor": anchor || "start", class: cls || "" };
  if (len) { a.textLength = len; a.lengthAdjust = cls ? "spacing" : "spacingAndGlyphs"; }
  add(svg, "text", Object.assign(a, extra || {}), text);
}

// Production by year
const line = document.getElementById("lineChart");
label(line, 282, 216, "Sum of Production by Crop_Year", 245, "start", "title");
["1.0M", "0.9M", "0.8M", "0.7M", "0.6M", "0.5M", "0.4M"].forEach((t, i) => {
  const y = 234.4 + i * 52.33;
  add(line, "line", { x1: 341, x2: 983, y1: y, y2: y, class: "grid" });
  label(line, 331, y + 4, t, 26, "end");
});
[2005, 2010, 2015, 2020].forEach((yr, i) => {
  const x = 387 + i * 171.85;
  add(line, "line", { x1: x, x2: x, y1: 234, y2: 548, class: "grid" });
  label(line, x, 564, String(yr), 26, "middle");
});
const ys = [489.7, 417.7, 488.7, 448.7, 449, 463.7, 384.3, 444.3, 268.3, 524.3, 370.3, 403.7, 392.7, 280.7, 250, 421.3, 437.7, 518.8];
add(line, "polyline", { class: "series", points: ys.map((y, i) => (386.7 + i * 34.37) + "," + y).join(" ") });
label(line, 661.5, 583.5, "Crop_Year", 67, "middle", "axis");
label(line, 0, 0, "Sum of Production", 119, "middle", "axis", { transform: "translate(295.500 391) rotate(-90)" });

// Production by state
const bars = document.getElementById("barChart");
label(bars, 282, 619, "Sum of Production by State_Name", 260, "start", "title");
["4M", "3M", "2M", "1M", "0M"].forEach((t, i) => {
  const y = 636.6 + i * 47.4;
  add(bars, "line", { x1: 349.5, x2: 984, y1: y, y2: y, class: "grid" });
  label(bars, 340, y + 4, t, 18, "end");
});
const states = [["Maharashtra", 655.7], ["Karnataka", 740.7], ["Uttar Pradesh", 743], ["Madhya Pradesh", 768], ["Gujarat", 769], ["Telangana", 793.7], ["Andhra Pradesh", 800.3], ["Bihar", 814.3], ["Tamil Nadu", 818.2], ["Odisha", 819.2], ["Haryana", 820.3], ["Chhattisgarh", 820.3], ["Rajasthan", 822.3], ["Punjab", 822.5], ["Jharkhand", 823.5], ["Assam", 824.3], ["Nagaland", 825], ["West Bengal", 825], ["Dadra and Nagar H...", 825], ["Uttarakhand", 825], ["Meghalaya", 825], ["Tripura", 825], ["Kerala", 825], ["Himachal Pradesh", 825], ["Mizoram", 825], ["Chandigarh", 825], ["Manipur", 825]];
states.forEach(([name, top], i) => {
  const x = 359.2 + i * 23;
  add(bars, "rect", { x: x, y: top, width: 18.6, height: 826.2 - top, class: "bar" });
  label(bars, 0, 0, name, 0, "end", "slant", { transform: `translate(${x + 5.5} 838.500) rotate(-34.500)` });
});
label(bars, 667, 927.5, "State_Name", 79, "middle", "axis");
label(bars, 0, 0, "Sum of Production", 119, "middle", "axis", { transform: "translate(295.500 731) rotate(-90)" });
```
